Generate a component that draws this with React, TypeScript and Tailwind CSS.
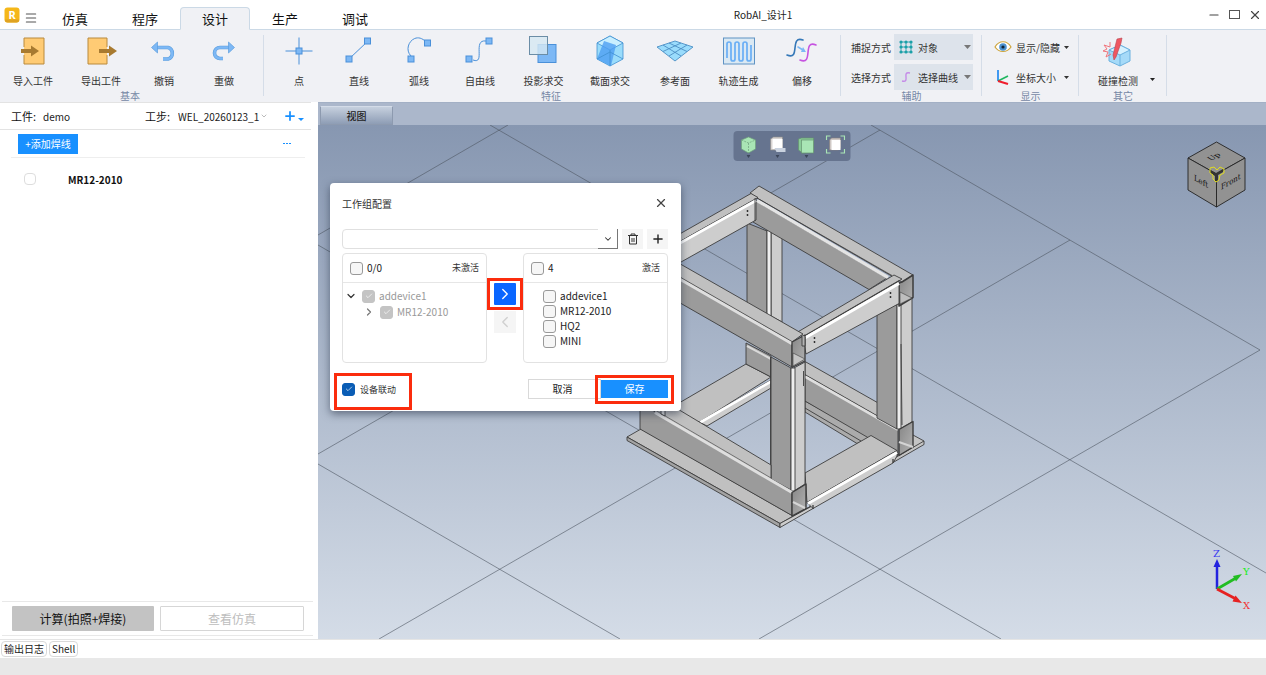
import type { ReactNode } from "react";
import { Check, ChevronDown, ChevronLeft, ChevronRight, Menu, Minus, Plus, X } from "lucide-react";

const tabs = ["仿真", "程序", "设计", "生产", "调试"];

const handle = "#4a90d9";
const node = "#7db8f5";

function ImportIcon() {
  return (
    <svg viewBox="0 0 32 32" className="size-8">
      <path d="M7 3H27V29H7V20M7 12V3" fill="#ffcb74" stroke="#b98a3c" strokeWidth="1" />
      <path d="M4 14H14V10.500L22 16L14 21.500V18H4Z" fill="#a87a30" />
    </svg>
  );
}
function ExportIcon() {
  return (
    <svg viewBox="0 0 32 32" className="size-8">
      <path d="M22 12V3H3V29H22V20" fill="#ffcb74" stroke="#b98a3c" strokeWidth="1" />
      <path d="M14 14H24V10.500L32 16L24 21.500V18H14Z" fill="#a87a30" />
    </svg>
  );
}
function UndoIcon() {
  return (
    <svg viewBox="0 0 32 32" className="size-8" fill="none">
      <path d="M9 12.500H20a6 6 0 0 1 0 11.500H15" stroke="#5b9ede" strokeWidth="3.600" />
      <path d="M9 12.500H20a6 6 0 0 1 0 11.500H15" stroke={node} strokeWidth="2.400" />
      <path d="M3.500 12.500L9.500 7V18Z" fill={node} stroke="#5b9ede" strokeWidth=".7" />
    </svg>
  );
}
function RedoIcon() {
  return (
    <svg viewBox="0 0 32 32" className="size-8" fill="none">
      <path d="M21 12.500H12a5.500 5.500 0 0 0 0 11H15" stroke="#5b9ede" strokeWidth="3.600" />
      <path d="M21 12.500H12a5.500 5.500 0 0 0 0 11H15" stroke={node} strokeWidth="2.400" />
      <path d="M26.500 12.500L20.500 7V18Z" fill={node} stroke="#5b9ede" strokeWidth=".7" />
    </svg>
  );
}
function PointIcon() {
  return (
    <svg viewBox="0 0 32 32" className="size-8" stroke={handle} fill={node}>
      <path d="M2.500 16H29.500M16 2.500V29.500" />
      <rect x="13" y="13" width="6" height="6" />
    </svg>
  );
}
function LineIcon() {
  return (
    <svg viewBox="0 0 32 32" className="size-8" stroke={handle} fill={node}>
      <path d="M6 24L25 6" />
      <rect x="3" y="21" width="6" height="6" />
      <rect x="21.500" y="3" width="6" height="6" />
    </svg>
  );
}
function ArcIcon() {
  return (
    <svg viewBox="0 0 32 32" className="size-8" stroke={handle} fill={node}>
      <path d="M8 21C-1 12 12-5 23 7" fill="none" />
      <rect x="5" y="21" width="6" height="6" />
      <rect x="21.500" y="5" width="6" height="6" />
    </svg>
  );
}
function CurveIcon() {
  return (
    <svg viewBox="0 0 32 32" className="size-8" stroke={handle} fill={node}>
      <path d="M9 25C22 30 8 4 22 6" fill="none" />
      <rect x="2" y="21" width="6" height="6" />
      <rect x="22" y="3" width="6" height="6" />
    </svg>
  );
}
function ProjectIcon() {
  return (
    <svg viewBox="0 0 32 32" className="size-8">
      <rect x="10" y="9.500" width="18" height="18" fill={node} stroke={handle} />
      <rect x="1.500" y="1.500" width="18" height="18" fill="#d6e8f3" fillOpacity=".82" stroke="#6b8da6" />
    </svg>
  );
}
function SectionIcon() {
  return (
    <svg viewBox="0 0 32 32" className="size-8" stroke="#3f8fd0" strokeWidth=".8" strokeLinejoin="round">
      <path d="M16 1L29 8V24L16 31L3 24V8Z" fill="#9adcfb" />
      <path d="M3 8L16 1L29 8L16 15Z" fill="#c9efff" />
      <path d="M10 6L22 10L17 31L3 24Z" fill="#4e9ff3" fillOpacity=".8" stroke="none" />
      <path d="M16 15V31M3 24L16 17L29 24" fill="none" />
    </svg>
  );
}
function PlaneIcon() {
  return (
    <svg viewBox="0 0 38 32" className="h-8 w-[38px]" stroke="#4c8fc4" strokeWidth=".9">
      <path d="M19 6L37 12L19 26L1 12Z" fill="#9adcfc" />
      <path d="M13 8L31 16.500M7 10L25 21M25 8L7 16.500M31 10L13 21" fill="none" />
    </svg>
  );
}
function TrackIcon() {
  return (
    <svg viewBox="0 0 32 32" className="size-8">
      <rect x=".5" y="3" width="31" height="26" fill="#dbe9f3" stroke="#5f93c4" />
      <path d="M4 23V9a2 2 0 0 1 4 0V24a2 2 0 0 0 4 0V9a2 2 0 0 1 4 0V24a2 2 0 0 0 4 0V9a2 2 0 0 1 4 0V24a2 2 0 0 0 4 0V10" fill="none" stroke="#69aef5" strokeWidth="1.700" />
    </svg>
  );
}
function OffsetIcon() {
  return (
    <svg viewBox="0 0 32 32" className="size-8" fill="none" strokeWidth="1.600" strokeLinecap="round">
      <path d="M17 5C3 0 15 26 1 20" stroke="#3578b8" />
      <path d="M30 10C16 4 28 31 14 25" stroke="#c653e0" />
      <path d="M12 12L17 15" stroke={node} />
      <path d="M20 17L15 17L17 12Z" fill={node} />
    </svg>
  );
}
function CollisionIcon() {
  return (
    <svg viewBox="0 0 32 32" className="size-8">
      <path d="M7 15L18 10L28 15V26L18 31L7 26Z" fill="#a5daf8" stroke="#6bb1df" />
      <path d="M7 15L18 20L28 15L18 10Z" fill="#d6f2ff" stroke="#6bb1df" />
      <path d="M18 20V31" stroke="#6bb1df" />
      <path d="M15 4L20 3L19 8L14 22L12 25L11 20Z" fill="#ef5660" stroke="#b74450" strokeWidth=".6" />
      <path d="M8 7V12L2 10L5 14L1 16L6 17L4 22L9 19" fill="none" stroke="#f0757c" />
    </svg>
  );
}
function TrashIcon() {
  return (
    <svg viewBox="0 0 12 12" className="size-3" fill="none" stroke="#333">
      <path d="M1 2.500H11M4 2V1H8V2M2.500 3V11H9.500V3M5 5V9M7 5V9" />
    </svg>
  );
}

function Tool({ label, width, children }: { label: string; width: string; children: ReactNode }) {
  return (
    <button className={`${width} flex flex-col items-center gap-[7px] pt-[5px]`}>
      {children}
      <span className="text-[10px] leading-[14px] text-[#333]">{label}</span>
    </button>
  );
}

function Group({ label, className, children }: { label: string; className: string; children: ReactNode }) {
  return (
    <section className={`${className} relative flex shrink-0 flex-col`}>
      <div className="flex h-[60px]">{children}</div>
      <h2 className="text-center text-[10px] leading-3 text-[#7688a5]">{label}</h2>
      <span className="absolute right-0 top-[5px] h-[61px] w-px bg-[#d5dde8]" />
    </section>
  );
}

function Caret({ className }: { className: string }) {
  return (
    <svg viewBox="0 0 8 5" preserveAspectRatio="none" className={className}>
      <path d="M0 0H8L4 5Z" fill="currentColor" />
    </svg>
  );
}

function RibbonSelect({ id, label, value, icon }: { id: string; label: string; value: string; icon: ReactNode }) {
  return (
    <div className="flex h-[26px] items-center">
      <label htmlFor={id} className="w-[43px] text-[10px] text-[#333]">{label}</label>
      <div className="grid h-full w-[79px] items-center bg-[#dde3eb]">
        <select id={id} className="col-start-1 row-start-1 h-full w-full appearance-none bg-transparent pl-6 text-[10px] text-[#333]">
          <option>{value}</option>
        </select>
        <span className="pointer-events-none col-start-1 row-start-1 flex items-center justify-between pl-[5px] pr-0.5">
          {icon}
          <Caret className="h-1 w-[7px] text-[#777]" />
        </span>
      </div>
    </div>
  );
}

function Tick({ label, tone, checked, disabled }: { label: string; tone: "empty" | "gray" | "blue"; checked?: boolean; disabled?: boolean }) {
  const box =
    tone === "empty" ? "border-[#999] bg-[#f6f6f6]" : tone === "gray" ? "border-[#c4c4c4] bg-[#c4c4c4]" : "border-[#0a5db5] bg-[#0a5db5]";
  const text = tone === "gray" ? "text-[#999] text-[10px]" : tone === "blue" ? "text-[#333] text-[9px] ml-px" : "text-[#222] text-[10px]";
  return (
    <label className="flex items-center gap-1 leading-none">
      <span className="grid size-[13px] place-items-center">
        <input type="checkbox" defaultChecked={checked} disabled={disabled} className={`${box} col-start-1 row-start-1 size-[13px] appearance-none rounded-[3px] border`} />
        {checked && <Check className="pointer-events-none col-start-1 row-start-1 size-2 text-white" />}
      </span>
      <span className={text}>{label}</span>
    </label>
  );
}

function Scene() {
  return (
    <svg viewBox="318 125 948 514" preserveAspectRatio="xMidYMid slice" className="absolute inset-0 h-full w-full">
      <defs>
        <linearGradient id="sky" x1="0" y1="0" x2="0" y2="1">
          <stop offset="0" stopColor="#8797b1" />
          <stop offset="1" stopColor="#d4dce7" />
        </linearGradient>
        <linearGradient id="tube" x1="0" y1="0" x2="1" y2="1">
          <stop offset="0" stopColor="#858585" />
          <stop offset="1" stopColor="#b4b4b4" />
        </linearGradient>
      </defs>
      <rect x="318" y="125" width="948" height="514" fill="url(#sky)" />
      <g stroke="#4f5762" strokeOpacity=".6" strokeWidth="1" fill="none">
        <path d="M871 125L1260 350M490 125L1266 573M318 245L1001 639M318 464L620 639" />
        <path d="M508 125L318 235M880 130L318 454M1070 240L379 639M1260 350L759 639" />
      </g>

      <g stroke="#3d3d3d" strokeWidth=".9" strokeLinejoin="round">
        <path d="M627 437L641 429L793 516L813 505L780 523.500Z" fill="#c0c0c0" />
        <path d="M627 437L780 523.500V527.500L627 440.500Z" fill="#a3a3a3" />
        <path d="M780 523.500L813 505.500V508.500L780 527.500Z" fill="#cdcdcd" />
        <path d="M805 401L871 437L857 443.500L805 412Z" fill="#ababab" />
        <path d="M805 408L861 441" />
        <path d="M898 455L913 435L924 441V444.500L893 462.500V458Z" fill="#c4c4c4" />
        <path d="M893 459L924 441" />

        <path d="M655 417L746 364L771 377L700 422Z" fill="#c0c0c0" />
        <path d="M699 422L771 380V388L707 426Z" fill="#cdcdcd" />
        <path d="M700 422.500L771 381.500" stroke="#fff" strokeWidth="2.600" />
        <path d="M746 343L771 356V377L746 364Z" fill="#9b9b9b" />
        <path d="M747 346L771 359" stroke="#d9d9d9" strokeWidth="2" />

        <path d="M747 223L767 231V316L747 303Z" fill="#9b9b9b" />
        <path d="M771 230L782 238V322L771 316Z" fill="#cdcdcd" />
        <path d="M767 230H771V317H767Z" fill="#f0f0f0" />

        <path d="M805 361.500L880 404L898 428L805 375Z" fill="#c0c0c0" />
        <path d="M805 375L898 428V455L805 401Z" fill="#9b9b9b" />
        <path d="M805 376.500L898 429.500" stroke="#dedede" strokeWidth="3" />
        <path d="M805 374.500L898 427.500" strokeWidth=".6" />

        <path d="M805 473L871 435.500L897 450.500L807 502.500Z" fill="#c0c0c0" />
        <path d="M807 502.500L897 450.500V456L893 463L813 508.500Z" fill="#cdcdcd" />
        <path d="M808 503.500L897 452.500" stroke="#fff" strokeWidth="2.800" />

        <path d="M877 315L897 304V429L877 418Z" fill="#9b9b9b" />
        <path d="M900 303L912 298V422L900 429Z" fill="#cdcdcd" />
        <path d="M897 304H901V429H897Z" fill="#eeeeee" />
        <path d="M901 344L902 425" />
        <path d="M899 429.500L913 421.500V447L899 455.500Z" fill="url(#tube)" strokeWidth="1.400" />
        <path d="M899 442L913 447" stroke="#d4d4d4" strokeWidth="2" />

        <path d="M750 193L759 186L913 275L902 282L757 198Z" fill="#c0c0c0" />
        <path d="M756 201L887 278L869 289.500L753 222Z" fill="#9b9b9b" />
        <path d="M757 200.500L888 277.500" stroke="#e4e4e4" strokeWidth="3.200" />
        <path d="M757 198L892 275.500" strokeWidth=".7" />

        <path d="M640 256.500L751 193.500L758 197.500L640 264Z" fill="#c0c0c0" />
        <path d="M640 264L756 199V220L640 285Z" fill="#cdcdcd" />
        <path d="M640 265.500L756 200.500" stroke="#fff" strokeWidth="2.800" />
        <path d="M755 198V221" />

        <path d="M902 282L913 275V297.500L899 306V283Z" fill="url(#tube)" strokeWidth="1.500" />
        <path d="M900 292L912 298L900 304Z" fill="#bebebe" strokeWidth=".6" />
        <path d="M796 333L894 275L902 279L803 337Z" fill="#c0c0c0" />
        <path d="M803 337L899 281V303.500L806 354Z" fill="#cdcdcd" />
        <path d="M804 338.500L899 283.500" stroke="#fff" strokeWidth="3" />
        <path d="M803 336.500L899 280.500" strokeWidth=".7" />

        <path d="M771 357L791 368V490L771 479Z" fill="#9b9b9b" />
        <path d="M794 368L805 362V484L794 491Z" fill="#cdcdcd" />
        <path d="M791 368H795V491H791Z" fill="#eeeeee" />
        <path d="M803.500 371V386M770.500 357V479" />

        <path d="M640 241L803 334L792 342L640 254.500Z" fill="#c0c0c0" />
        <path d="M640 256L792 344V367L640 280Z" fill="#9b9b9b" />
        <path d="M640 256L792 343.500" stroke="#dedede" strokeWidth="3.200" />
        <path d="M640 254L792 341.500" strokeWidth=".7" />
        <path d="M792 342L805 335V361L792 367.500Z" fill="url(#tube)" strokeWidth="1.300" />
        <path d="M793 353L805 359L793 366Z" fill="#c5c5c5" strokeWidth=".6" />
        <path d="M802 335V346H805V337" fill="#b3b3b3" />

        <path d="M640 405L671 405L771 465V479L792 492L640 410Z" fill="#c0c0c0" />
        <path d="M640 403L792 492V515.500L640 429Z" fill="#9b9b9b" />
        <path d="M655 412.500L792 492.500" stroke="#dedede" strokeWidth="3" />
        <path d="M655 410L771 478" strokeWidth=".6" />
        <path d="M661 405H665V416L661 414Z" fill="#e0e0e0" />
        <path d="M792 492.500L806 484V508.500L792 516Z" fill="url(#tube)" strokeWidth="1.400" />
        <path d="M793 502L805 508" stroke="#d5d5d5" strokeWidth="2" />
        <path d="M813 505V509M893 459V463" strokeWidth="1.300" />
      </g>
      <g fill="#222">
        <circle cx="747.500" cy="211" r=".9" /><circle cx="747.500" cy="215" r=".9" />
        <circle cx="890.500" cy="293" r=".9" /><circle cx="890.500" cy="297" r=".9" />
        <circle cx="814.500" cy="338" r=".9" /><circle cx="814.500" cy="342" r=".9" />
      </g>
    </svg>
  );
}

function ViewCube() {
  return (
    <svg viewBox="0 0 60 68" className="absolute right-5 top-[15px] h-[68px] w-[60px]">
      <g fill="#929292" stroke="#222" strokeWidth=".9" strokeLinejoin="round">
        <path d="M30.500 2L59 18L30.500 34L2 18Z" />
        <path d="M2 18L30.500 34V67L2 50Z" />
        <path d="M30.500 34L59 18V50L30.500 67Z" />
      </g>
      <path d="M24 30L30 33L37 29L37 32L32 35V41H29V36L24 33Z" fill="#333" />
      <path d="M24 28L28 27L31 30L34 27L38 29V33L34 35L33 40L30 42L27 39V35L24 33Z" fill="none" stroke="#e0dc20" strokeWidth="1" />
      <g fill="#111" className="font-['DejaVu_Serif',serif] text-[8px]">
        <text transform="matrix(.87 .5 0 1 8 40)">Left</text>
        <text transform="matrix(.87 -.5 0 1 35 50)">Front</text>
        <text transform="matrix(.87 -.5 .8 .5 25 21)">Up</text>
      </g>
    </svg>
  );
}

function AxisTriad() {
  return (
    <svg viewBox="0 0 42 66" className="absolute bottom-[26px] right-3 h-[66px] w-[42px] font-['DejaVu_Serif',serif] text-[10px]">
      <path d="M5 42V17" stroke="#2323df" strokeWidth="2.500" />
      <path d="M5 12L8.500 20H1.500Z" fill="#2323df" />
      <path d="M5 42L24 31" stroke="#22bd22" strokeWidth="2.800" />
      <path d="M30 27L24 34.500L21 29Z" fill="#22bd22" />
      <path d="M5 42L24 52" stroke="#e62222" strokeWidth="2.800" />
      <path d="M30 56L20.500 54.500L23.500 48.500Z" fill="#e62222" />
      <text x="1" y="10" fill="#3838f0">Z</text>
      <text x="31" y="28" fill="#22ee22">Y</text>
      <text x="31" y="62" fill="#f23333">X</text>
    </svg>
  );
}

function MiniCube({ kind }: { kind: "green" | "solid" | "box" | "fit" }) {
  return (
    <button aria-label={kind} className="flex flex-col items-center">
      <svg viewBox="0 0 20 20" className="size-5" strokeWidth=".7">
        {kind === "green" && (
          <g fill="#a9e5b5" stroke="#6fa07c" strokeLinejoin="round">
            <path d="M10 2L17 5V14L10 18L3 14V5Z" />
            <path d="M3 5L10 8L17 5M10 8V18" fill="none" strokeDasharray="2 1" />
          </g>
        )}
        {kind === "solid" && (
          <g>
            <path d="M3 4L6 2H15V13L12 15H3Z" fill="#d8d4d2" stroke="#8b8b8b" />
            <rect x="5" y="4" width="10" height="10" fill="#fff" />
            <path d="M7 13H18V17H9Z" fill="#c9d2df" />
          </g>
        )}
        {kind === "box" && (
          <g stroke="#64936f">
            <path d="M2 4L5 3H17V17L6 18L2 15Z" fill="#8acb98" />
            <rect x="5" y="5" width="12" height="13" fill="#a9e5b5" />
          </g>
        )}
        {kind === "fit" && (
          <g>
            <path d="M1 5V1H5M15 1H19V5M19 14V18H15M5 18H1V14" fill="none" stroke="#a9e5b5" strokeWidth="1.200" />
            <path d="M4 5L6 3H15V13L13 15H4Z" fill="#cfc8c5" stroke="#857f7f" />
            <rect x="6" y="5" width="9" height="10" fill="#fff" />
          </g>
        )}
      </svg>
      {kind === "fit" ? <span className="h-[3px]" /> : <Caret className="h-[3px] w-1 text-[#3c465a]" />}
    </button>
  );
}

function ListPanel({ count, title, children }: { count: string; title: string; children: ReactNode }) {
  return (
    <div className="h-[110px] flex-1 rounded border border-[#e2e2e2]">
      <div className="flex h-[29px] items-center justify-between border-b border-[#e6e6e6] px-[7px]">
        <Tick label={count} tone="empty" />
        <span className="text-[9px] text-[#333]">{title}</span>
      </div>
      {children}
    </div>
  );
}

function WorkgroupDialog() {
  return (
    <div role="dialog" aria-labelledby="dialog-title" className="absolute left-3 top-[81px] w-[351px] rounded bg-white pb-3 pl-3 pr-[13px] shadow-[0_3px_8px_rgba(30,40,60,0.55)]">
      <header className="flex h-[46px] items-center justify-between pb-1.5">
        <h2 id="dialog-title" className="text-[10px] text-[#333]">工作组配置</h2>
        <button aria-label="关闭"><X className="size-3.5 text-[#444]" /></button>
      </header>
      <div className="flex h-5 gap-1">
        <div className="grid flex-1">
          <select aria-label="工作组" className="col-start-1 row-start-1 appearance-none rounded border border-[#e0e0e0] bg-white text-[10px]">
            <option></option>
          </select>
          <span className="pointer-events-none col-start-1 row-start-1 flex w-5 items-center justify-center justify-self-end border-b border-r border-[#777] bg-white">
            <ChevronDown className="size-2.5 text-[#333]" strokeWidth={2.5} />
          </span>
        </div>
        <button aria-label="删除" className="grid w-[21px] place-items-center bg-[#f5f5f5]"><TrashIcon /></button>
        <button aria-label="添加" className="grid w-[21px] place-items-center bg-[#f5f5f5]"><Plus className="size-3.5 text-[#222]" strokeWidth={2.4} /></button>
      </div>
      <div className="mt-1 flex">
        <ListPanel count="0/0" title="未激活">
          <ul className="pl-0.5 pt-[5px]">
            <li className="flex h-4 items-center gap-[5px]"><ChevronDown className="size-3 text-[#333]" strokeWidth={2.4} /><Tick label="addevice1" tone="gray" checked disabled /></li>
            <li className="flex h-4 items-center gap-[5px] pl-[18px]"><ChevronRight className="size-3 text-[#777]" strokeWidth={2.4} /><Tick label="MR12-2010" tone="gray" checked disabled /></li>
          </ul>
        </ListPanel>
        <div className="relative flex w-9 flex-col items-center gap-1.5 pt-[30px]">
          <button aria-label="激活" className="grid size-[22px] place-items-center rounded-[1px] bg-[#0a66ff]"><ChevronRight className="size-[18px] text-white" strokeWidth={1.8} /></button>
          <button aria-label="取消激活" disabled className="grid size-[22px] place-items-center bg-[#f5f5f5]"><ChevronLeft className="size-[18px] text-[#d0d0d0]" strokeWidth={1.8} /></button>
          <span className="pointer-events-none absolute left-0 top-[25px] h-8 w-9 border-[3px] border-[#fb2c0d]" />
        </div>
        <ListPanel count="4" title="激活">
          <ul className="pl-[19px] pt-[5px]">
            {["addevice1", "MR12-2010", "HQ2", "MINI"].map((name) => (
              <li key={name} className="flex h-[15px] items-center pt-px"><Tick label={name} tone="empty" /></li>
            ))}
          </ul>
        </ListPanel>
      </div>
      <footer className="mt-4 flex h-5 items-center">
        <div className="relative flex h-full flex-1 items-center">
          <Tick label="设备联动" tone="blue" checked />
          <span className="pointer-events-none absolute -left-2 -top-1.5 h-[37px] w-[78px] border-[3px] border-[#fb2c0d]" />
        </div>
        <button className="h-5 w-[73px] border border-[#d9d9d9] pr-1 text-[10px] leading-none text-[#222]">取消</button>
        <div className="relative flex">
          <button className="h-[18px] w-[67px] bg-[#1890ff] text-[10px] leading-none text-white">保存</button>
          <span className="pointer-events-none absolute -left-1.5 -top-[5px] h-[29px] w-[79px] border-[3px] border-[#fb2c0d]" />
        </div>
      </footer>
    </div>
  );
}

export default function App() {
  return (
    <div className="flex h-screen flex-col overflow-hidden bg-white font-['Noto_Sans_CJK_SC',sans-serif] text-[#222]">
      <header className="flex h-[30px] shrink-0 border-b border-[#cbd9e6]">
        <div className="flex w-10 items-center gap-1 pl-1">
          <svg viewBox="0 0 16 16" className="size-4 font-['Noto_Sans',sans-serif] text-[11px] font-bold">
            <rect x=".5" y=".5" width="15" height="15" rx="3" fill="#f5b719" />
            <path d="M1 12.500H15V13a2.500 2.500 0 0 1-2.500 2.500H3.500A2.500 2.500 0 0 1 1 13Z" fill="#dfa322" />
            <text x="8" y="12" textAnchor="middle" fill="#fff">R</text>
          </svg>
          <button aria-label="菜单" className="pt-1.5"><Menu className="size-3.5 text-[#555]" strokeWidth={1.8} /></button>
        </div>
        <nav className="-mb-px flex items-end">
          {tabs.map((tab) => (
            <a key={tab} href={`#${tab}`} className={`flex h-[23px] w-[70px] items-center justify-center rounded-t-sm border text-[13px] leading-none text-[#111] ${tab === "设计" ? "border-[#cbd9e6] border-b-[#f0f1f5] bg-[#f0f1f5]" : "border-transparent"}`}>
              {tab}
            </a>
          ))}
        </nav>
        <h1 className="flex flex-1 items-center justify-center text-[10px] text-[#222]">RobAI_设计1</h1>
        <div className="flex w-[130px] items-center justify-end gap-2 pr-1 text-[#444]">
          <button aria-label="最小化"><Minus className="size-3.5" strokeWidth={1.8} /></button>
          <button aria-label="最大化" className="h-[9px] w-[11px] border border-[#555]" />
          <button aria-label="关闭窗口"><X className="size-3.5" /></button>
        </div>
      </header>

      <div className="flex h-[72px] shrink-0 bg-[#f0f1f5]">
        <Group label="基本" className="w-[264px] pr-1">
          <Tool label="导入工件" width="w-[66px]"><ImportIcon /></Tool>
          <Tool label="导出工件" width="w-[70px]"><ExportIcon /></Tool>
          <Tool label="撤销" width="w-14"><UndoIcon /></Tool>
          <Tool label="重做" width="w-16"><RedoIcon /></Tool>
        </Group>
        <Group label="特征" className="w-[577px] pl-[5px] pr-2">
          <Tool label="点" width="w-[60px]"><PointIcon /></Tool>
          <Tool label="直线" width="w-[60px]"><LineIcon /></Tool>
          <Tool label="弧线" width="w-[60px]"><ArcIcon /></Tool>
          <Tool label="自由线" width="w-[62px]"><CurveIcon /></Tool>
          <Tool label="投影求交" width="w-[65px]"><ProjectIcon /></Tool>
          <Tool label="截面求交" width="w-[68px]"><SectionIcon /></Tool>
          <Tool label="参考面" width="w-[62px]"><PlaneIcon /></Tool>
          <Tool label="轨迹生成" width="w-[65px]"><TrackIcon /></Tool>
          <Tool label="偏移" width="w-[62px]"><OffsetIcon /></Tool>
        </Group>
        <Group label="辅助" className="w-[141px]">
          <div className="flex flex-col gap-1 pl-2.5 pt-1">
            <RibbonSelect
              id="snap"
              label="捕捉方式"
              value="对象"
              icon={
                <svg viewBox="0 0 14 14" className="size-3.5" stroke="#1ba0a8" fill="#1ba0a8">
                  <path d="M2 1V13M7 1V13M12 1V13M1 2H13M1 7H13M1 12H13" strokeWidth=".8" />
                  <path d="M2 2h.01M7 2h.01M12 2h.01M2 7h.01M7 7h.01M12 7h.01M2 12h.01M7 12h.01M12 12h.01" strokeWidth="3.200" strokeLinecap="round" />
                </svg>
              }
            />
            <RibbonSelect
              id="pick"
              label="选择方式"
              value="选择曲线"
              icon={
                <svg viewBox="0 0 14 14" className="size-3.5" fill="none" stroke="#c58be8" strokeWidth="1.400">
                  <path d="M11 3C2 1 12 13 3 11" />
                </svg>
              }
            />
          </div>
        </Group>
        <Group label="显示" className="w-[97px]">
          <div className="flex flex-col gap-1 pl-3 pt-1 text-[10px] text-[#333]">
            <button className="flex h-[26px] items-center gap-1">
              <svg viewBox="0 0 18 14" className="h-3.5 w-[18px]">
                <path d="M1 7C5 0 13 0 17 7C13 13 5 13 1 7Z" fill="#fff" stroke="#cda53e" strokeWidth="1.200" />
                <circle cx="9" cy="7" r="3.800" fill="#4b91cf" /><circle cx="9" cy="7" r="1.600" fill="#123" />
              </svg>
              <span className="w-11 whitespace-nowrap text-left">显示/隐藏</span>
              <Caret className="h-[3px] w-[5px]" />
            </button>
            <button className="flex h-[26px] items-center gap-1">
              <svg viewBox="0 0 18 16" className="h-4 w-[18px]" fill="none" strokeWidth="1.600">
                <path d="M4 12V1" stroke="#1684f0" /><path d="M4 12L14 7" stroke="#20b760" /><path d="M4 12L14 15" stroke="#f01d2d" strokeWidth="2" />
              </svg>
              <span className="w-11 text-left">坐标大小</span>
              <Caret className="h-[3px] w-[5px]" />
            </button>
          </div>
        </Group>
        <Group label="其它" className="w-[88px]">
          <div className="flex pl-[7px]">
            <Tool label="碰撞检测" width="w-16"><CollisionIcon /></Tool>
            <button aria-label="更多" className="pt-[39px]"><Caret className="h-[3px] w-[5px]" /></button>
          </div>
        </Group>
      </div>

      <main className="flex min-h-0 flex-1">
        <aside className="flex w-[318px] shrink-0 flex-col pr-[5px]">
          <div className="mr-0.5 flex h-7 items-center border-b border-t border-[#e3e3e3] pl-[11px] text-[10px]">
            <span className="w-8 text-[11px] text-[#111]">工件:</span>
            <span className="w-[102px]">demo</span>
            <label htmlFor="step" className="w-[33px] text-[11px] text-[#111]">工步:</label>
            <select id="step" className="w-[82px] appearance-none overflow-hidden bg-transparent text-[10px]">
              <option>WEL_20260123_1</option>
            </select>
            <ChevronDown className="size-2 shrink-0 text-[#999]" />
            <button aria-label="新建工步" className="ml-[15px] flex items-center gap-px text-[#1890ff]">
              <Plus className="size-3.5" strokeWidth={3} />
              <Caret className="mt-1.5 h-[3px] w-1.5" />
            </button>
          </div>
          <div className="ml-[11px] mr-2 flex h-7 items-center justify-between border-b border-[#eee] pl-[7px] pr-3.5">
            <button className="h-5 w-[60px] bg-[#1890ff] text-[10px] leading-none text-white">+添加焊线</button>
            <button aria-label="更多操作" className="flex gap-px">
              <i className="h-px w-0.5 bg-[#1890ff]" /><i className="h-px w-0.5 bg-[#1890ff]" /><i className="h-px w-0.5 bg-[#1890ff]" />
            </button>
          </div>
          <label className="flex h-[42px] items-center gap-8 pl-6 text-[10px] font-bold text-[#111]">
            <input type="checkbox" className="size-3 appearance-none rounded-sm border border-[#ddd] bg-white" />
            MR12-2010
          </label>
          <div className="ml-0.5 mt-auto flex h-[35px] items-center gap-1.5 border-b border-t border-[#e8e8e8] pl-2.5 pr-[9px]">
            <button className="h-[25px] flex-1 rounded-[1px] bg-[#c3c3c3] text-[12px] leading-none text-[#111]">计算(拍照+焊接)</button>
            <button className="h-[25px] flex-1 rounded-[1px] border border-[#d6d6d6] text-[12px] leading-none text-[#bdbdbd]">查看仿真</button>
          </div>
          <div className="h-[3px]" />
        </aside>

        <section className="relative flex min-w-0 flex-1 flex-col">
          <div className="flex h-[23px] items-end border-t border-[#a3b0c5] bg-[#abb7cb] pl-0.5">
            <button className="h-[19px] w-[73px] border border-[#8d9aaf] border-t-[#d4dce8] bg-linear-to-b from-[#c6d0de] to-[#8e9db5] text-[10px] leading-none font-medium text-[#222]">视图</button>
          </div>
          <div className="relative flex-1 overflow-hidden">
            <Scene />
            <ViewCube />
            <AxisTriad />
          </div>
          <div className="absolute left-1/2 top-[29px] flex h-[30px] -translate-x-1/2 items-center gap-[9px] rounded bg-[#66748f] px-[5px]">
            <MiniCube kind="green" />
            <MiniCube kind="solid" />
            <MiniCube kind="box" />
            <MiniCube kind="fit" />
          </div>
          <WorkgroupDialog />
        </section>
      </main>

      <div className="flex h-[19px] shrink-0 items-center gap-0.5 border-t border-[#e5e5e5] pl-px text-[10px] leading-none">
        <button className="h-4 rounded-sm border border-[#d9d9d9] px-0.5">输出日志</button>
        <button className="h-4 rounded-sm border border-[#d9d9d9] px-0.5">Shell</button>
      </div>
      <footer className="h-[17px] shrink-0 bg-[#e8e8e8]" />
    </div>
  );
}
